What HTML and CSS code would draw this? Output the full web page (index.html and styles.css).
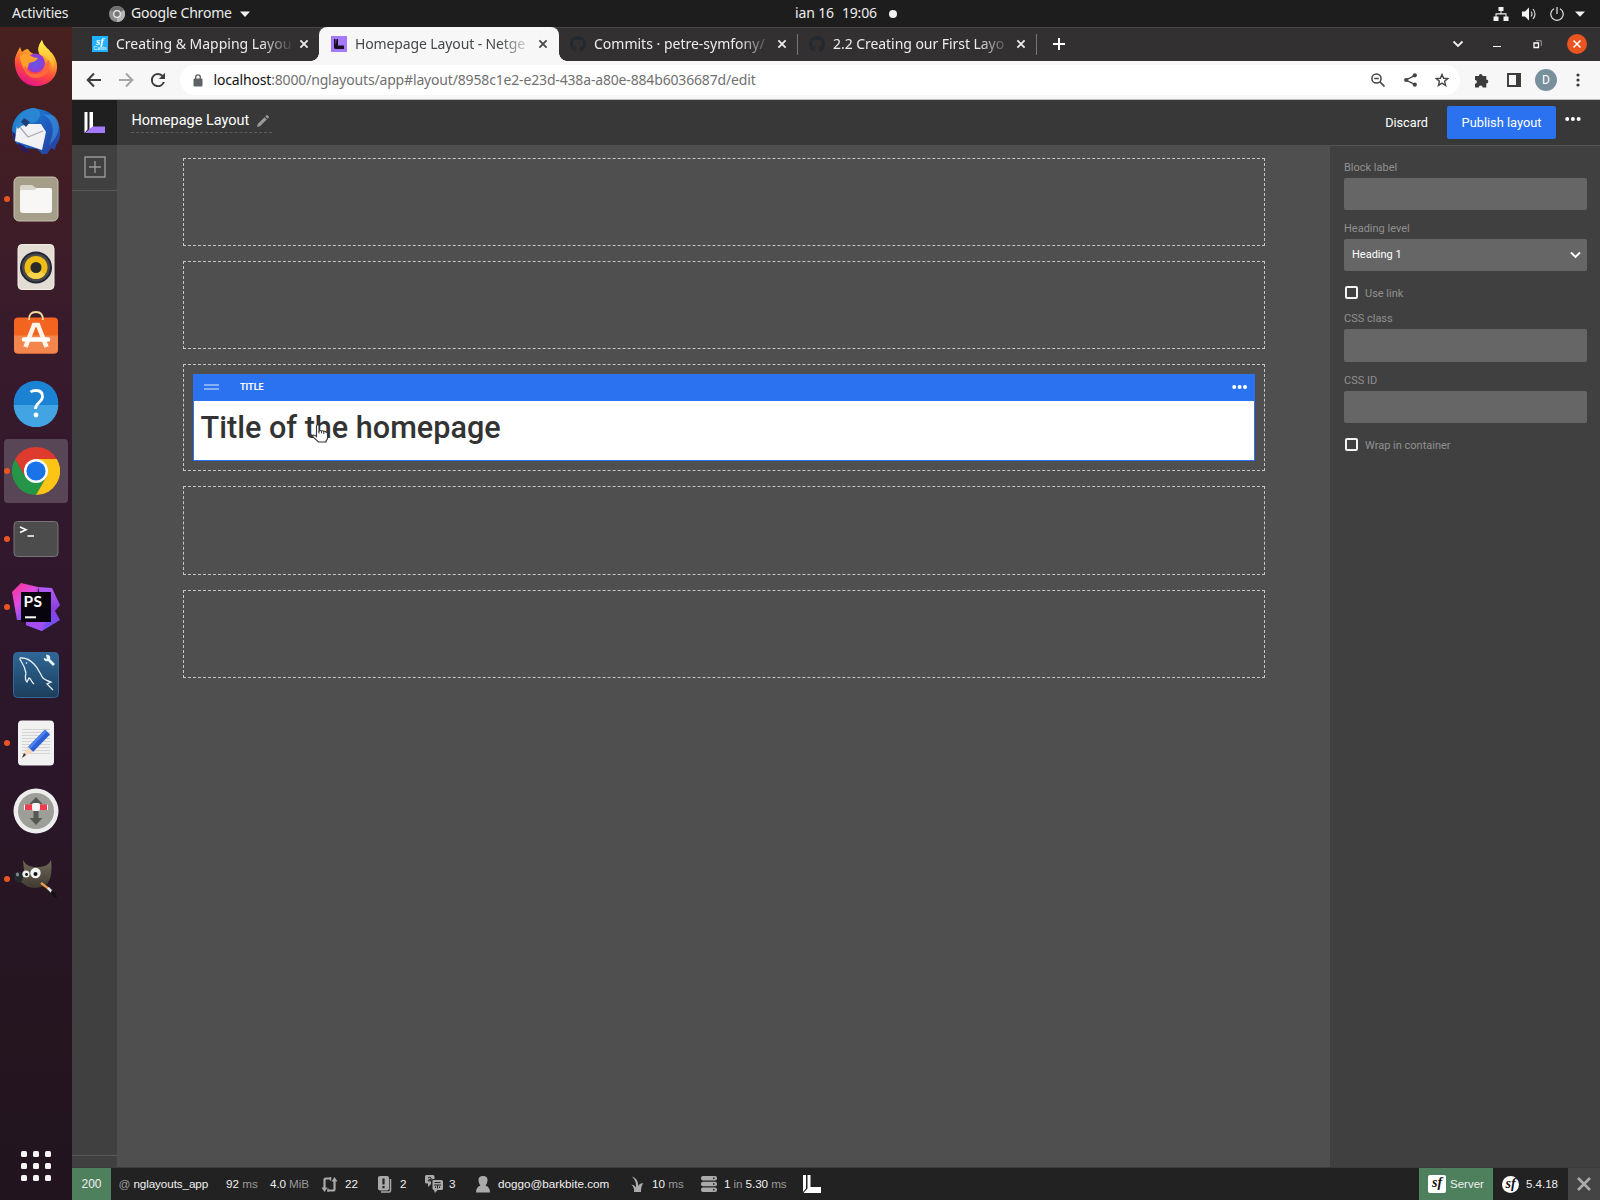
FILE: index.html
```html
<!DOCTYPE html>
<html lang="en">
<head>
<meta charset="utf-8">
<title>Homepage Layout - Netgen Layouts</title>
<link rel="stylesheet" href="styles.css">
</head>
<body>
<svg width="0" height="0" aria-hidden="true">
  <defs>
    <symbol id="x" viewBox="0 0 10 10"><path d="M1.4 1.4l7.2 7.2M8.6 1.4L1.4 8.6" fill="none" stroke="currentColor" stroke-width="1.8"/></symbol>
    <symbol id="github" viewBox="0 0 16 16"><path fill="#24292f" d="M8 0C3.58 0 0 3.58 0 8c0 3.54 2.29 6.53 5.47 7.59.4.07.55-.17.55-.38 0-.19-.01-.82-.01-1.49-2.01.37-2.53-.49-2.69-.94-.09-.23-.48-.94-.82-1.13-.28-.15-.68-.52-.01-.53.63-.01 1.08.58 1.23.82.72 1.21 1.87.87 2.33.66.07-.52.28-.87.51-1.07-1.78-.2-3.64-.89-3.64-3.95 0-.87.31-1.59.82-2.15-.08-.2-.36-1.02.08-2.12 0 0 .67-.21 2.2.82.64-.18 1.32-.27 2-.27s1.36.09 2 .27c1.53-1.04 2.2-.82 2.2-.82.44 1.1.16 1.92.08 2.12.51.56.82 1.27.82 2.15 0 3.07-1.87 3.75-3.65 3.95.29.25.54.73.54 1.48 0 1.07-.01 1.93-.01 2.2 0 .21.15.46.55.38A8.01 8.01 0 0016 8c0-4.42-3.58-8-8-8z"/></symbol>
    <linearGradient id="ff" x1=".7" y1="0" x2=".3" y2="1"><stop offset="0" stop-color="#fff44f"/><stop offset=".35" stop-color="#ffa02a"/><stop offset=".65" stop-color="#ff4a3e"/><stop offset="1" stop-color="#e3108c"/></linearGradient>
    <linearGradient id="ffy" x1="0" y1="0" x2="0" y2="1"><stop offset="0" stop-color="#fff44f"/><stop offset="1" stop-color="#ffa52b"/></linearGradient>
    <radialGradient id="ffp"><stop offset="0" stop-color="#5a5ce8"/><stop offset="1" stop-color="#9a38d2"/></radialGradient>
    <linearGradient id="tb" x1="0" y1="0" x2="1" y2="1"><stop offset="0" stop-color="#2196dd"/><stop offset=".5" stop-color="#1c5fc0"/><stop offset="1" stop-color="#2a3c9c"/></linearGradient>
    <linearGradient id="psa" x1="0" y1="0" x2=".6" y2="1"><stop offset="0" stop-color="#ff318c"/><stop offset=".5" stop-color="#e04be0"/><stop offset="1" stop-color="#6b57ff"/></linearGradient>
    <linearGradient id="psb" x1="0" y1="0" x2="0" y2="1"><stop offset="0" stop-color="#b45cf5"/><stop offset=".5" stop-color="#8a3fe0"/><stop offset="1" stop-color="#6b57ff"/></linearGradient>
    <linearGradient id="my" x1="0" y1="0" x2="0" y2="1"><stop offset="0" stop-color="#2f6797"/><stop offset="1" stop-color="#1c3e5c"/></linearGradient>
    <linearGradient id="gimp" x1="0" y1="0" x2="0" y2="1"><stop offset="0" stop-color="#70695a"/><stop offset="1" stop-color="#3f3a30"/></linearGradient>
  </defs>
</svg>

<header class="topbar">
  <span class="tb-activities">Activities</span>
  <svg class="tb-chrome" width="16" height="16" viewBox="0 0 16 16"><circle cx="8" cy="8" r="8" fill="#8c8c8c"/><path d="M8 8L1 4A8 8 0 0115 4z" fill="#6f6f6f"/><path d="M8 8l7-4A8 8 0 018 16z" fill="#b5b5b5"/><circle cx="8" cy="8" r="3.900" fill="#eee"/><circle cx="8" cy="8" r="2.700" fill="#777"/></svg>
  <span class="tb-app">Google Chrome</span>
  <svg class="tb-caret" width="10" height="6" viewBox="0 0 10 6"><path d="M0 .5h10L5 6z" fill="#f2f2f2"/></svg>
  <div class="tb-clock"><span>ian 16</span><span>19:06</span><i></i></div>
  <div class="tb-status">
    <svg width="16" height="14" viewBox="0 0 16 14"><path d="M5.500 0h5v4h-2v2.300h5V9.500h2V14h-5V9.500h2V7.500H3.500v2h2V14h-5V9.500h2V6.300h5V4h-2z" fill="#f2f2f2"/></svg>
    <svg width="15" height="14" viewBox="0 0 15 14"><path d="M0 4.500h3L7 .5v13L3 9.500H0z" fill="#f2f2f2"/><path d="M9 4.500q2 2.500 0 5M11 2q4 5 0 10" stroke="#d8d8d8" stroke-width="1.200" fill="none"/></svg>
    <svg width="14" height="14" viewBox="0 0 14 14"><path d="M4 1.700a6.200 6.200 0 106 0M7 0v7" stroke="#e6e6e6" stroke-width="1.200" fill="none"/></svg>
    <svg width="10" height="6" viewBox="0 0 10 6"><path d="M0 .5h10L5 5.800z" fill="#f2f2f2"/></svg>
  </div>
</header>

<div class="desktop">
<nav class="dock">
  <div class="app"><svg width="48" height="48" viewBox="0 0 48 48"><path d="M3 26C2 18 5 14 8 8l2 5c2-2 4-3 6-3 1 2 3 4 6 5l6 2C24 9 28 5 30 1c1 5 4 7 7 10l1 3 1-1c4 5 6 9 6 15 0 11-9 19-21 19S4 37 3 26z" fill="url(#ff)"/><path d="M30 1c1 5 4 7 7 10 5 6 6 12 4 19-1-6-6-12-11-14-6-3-3-11 0-15z" fill="url(#ffy)"/><circle cx="23.500" cy="24" r="9.500" fill="url(#ffp)"/><path d="M8 17c4-3 8-2 11 0 2 1 4 2 7 2-2 4-6 4-9 5-1 5-2 5-3 9-3-5-6-9-6-16z" fill="#ffa02a"/><path d="M14 27c1 6 5 8 10 8s9-4 9-10l4-4c2 9-3 18-13 18-7 0-12-5-12-11z" fill="#ff6a3c"/></svg></div>
  <div class="app"><svg width="48" height="48" viewBox="0 0 48 48"><path d="M0 24C0 12 9 3 17 2l4-1 3 1c13 0 23 9 24 22 0 7-1 11-4 14l-1 5-4-2-4 6-5 0-5-5-12-1C6 40 0 33 0 24z" fill="url(#tb)"/><path d="M6 36c1 6 6 10 12 10l-6-7zM0 24l4 4-2 6z" fill="#2b1a64"/><path d="M5 17l24 0 5 8-4 18L3 34z" fill="#f2f2f4"/><path d="M7 19l9 11 15-6" fill="none" stroke="#a9a9b2" stroke-width="1.300"/><path d="M4 19C8 6 15 1 22 1c7 1 8 7 3 13-7 4-14 2-19 8z" fill="#2a86d2"/><path d="M9 15l3-4 6 4-4 5z" fill="#1f3e78"/><path d="M29 7c12 4 15 16 8 31 13-11 12-26 3-30z" fill="#3f9fe8" opacity=".55"/></svg></div>
  <div class="app run"><svg width="48" height="48" viewBox="0 0 48 48"><rect x="2" y="2" width="44" height="44" rx="5" fill="#a59e89" stroke="#c7c1b0"/><path d="M8 12q0-2 2-2h10l4 3h14q2 0 2 2v8H8z" fill="#d9d5ca"/><path d="M8 17q0-2 2-2h12l3-2h13q2 0 2 2v20q0 3-3 3H11q-3 0-3-3z" fill="#f8f7f5"/></svg></div>
  <div class="app"><svg width="48" height="48" viewBox="0 0 48 48"><rect x="6" y="1.500" width="36" height="45" rx="4" fill="#e4ddd3" stroke="#f2ede6"/><circle cx="24" cy="24.500" r="16" fill="#24273a"/><circle cx="24" cy="24.500" r="14" fill="#4a4a48"/><circle cx="24" cy="24.500" r="11.500" fill="#f0bd18"/><path d="M24 24.500l9 7a11.500 11.500 0 01-18 0z" fill="#ffe16a" opacity=".6"/><circle cx="24" cy="24.500" r="5.500" fill="#2a2a2a"/></svg></div>
  <div class="app"><svg width="48" height="48" viewBox="0 0 48 48"><rect x="2" y="6.500" width="44" height="36" rx="4" fill="#f2641f"/><path d="M2 24.500h44V38q0 4.500-4 4.500H6q-4 0-4-4.500z" fill="#f3864d"/><path d="M17 9q0-8 7-8t7 8" fill="none" stroke="#f7d9a0" stroke-width="1.800"/><path d="M13.500 36L22 14h4l8.500 22" fill="none" stroke="#fff3ea" stroke-width="4.500"/><path d="M12 28.500h24" stroke="#fff" stroke-width="4.500" stroke-linecap="round"/></svg></div>
  <div class="app"><svg width="48" height="48" viewBox="0 0 48 48"><circle cx="24" cy="24" r="22.300" fill="#1c82d4"/><path d="M1.700 26h44.600a22.300 22.300 0 01-44.600 0z" fill="#42a4e3"/><path d="M18.500 13q2-1.500 5.500-1.500 6.500 0 6.500 6 0 3-3.500 6-3.500 3-3.500 6.500" fill="none" stroke="#fff" stroke-width="2.800"/><circle cx="24" cy="36" r="2.400" fill="#fff"/></svg></div>
  <div class="app run active"><svg width="48" height="48" viewBox="0 0 48 48"><path d="M3.200 12A24 24 0 0024 48l10.400-18L24 34 13.600 30z" fill="#259647"/><path d="M24 12h20.800A24 24 0 0024 0 24 24 0 003.200 12l10.400 18z" fill="#de3b2e"/><path d="M24 12h20.800A24 24 0 0124 48l10.400-18z" fill="#fcc414"/><circle cx="24" cy="24" r="12" fill="#fff"/><circle cx="24" cy="24" r="9.600" fill="#1a73e8"/></svg></div>
  <div class="app run"><svg width="48" height="48" viewBox="0 0 48 48"><rect x="2" y="6.500" width="44" height="35" rx="3.500" fill="#4c4c4c" stroke="#777"/><path d="M8 12l6 2.700L8 17.500M15.500 21H22" fill="none" stroke="#fff" stroke-width="1.600"/></svg></div>
  <div class="app run"><svg width="48" height="48" viewBox="0 0 48 48"><path d="M9 0l17 4-2 33H5L0 9z" fill="url(#psa)"/><path d="M26 4l14 1 8 17-5 6 5 9-18 11-16-6 0-5h20z" fill="url(#psb)"/><path d="M14 37l20 0-4 11-16-6z" fill="#a34df0"/><rect x="9" y="9" width="30" height="30" fill="#08040e"/><text x="11.500" y="23.500" class="ps">PS</text><path d="M13 34.300h11" stroke="#fff" stroke-width="2"/></svg></div>
  <div class="app"><svg width="48" height="48" viewBox="0 0 48 48"><rect x="1.500" y="1.500" width="45" height="45" rx="4" fill="url(#my)" stroke="#33699a"/><path d="M14 22c-1-5-3-9-5-12-2-2-1-4 1-3 5 0 8 2 12 6 5 5 6 10 9 14 2 2 5 3 8 4l-4 2c2 2 4 4 6 6M14 22c-1 4-1 7 1 9l2-4c2 0 2 4 5 6" fill="none" stroke="#e8f1f6" stroke-width="1.300"/><path d="M34 4c3-1 5 2 4 4l5 5-2 2-5-5c-2 1-5-1-4-3l3 1z" fill="#e8f1f6"/><circle cx="14.500" cy="12" r=".8" fill="#fff"/></svg></div>
  <div class="app run"><svg width="48" height="48" viewBox="0 0 48 48"><rect x="6" y="1.500" width="36" height="45" rx="4" fill="#f1f1f1"/><path d="M10 10.500h28M10 13.500h28M10 16.500h28M10 19.500h28M10 22.500h28M10 25.500h28M10 28.500h28M10 31.500h28M10 34.500h28" stroke="#d4d4d4"/><path d="M33 10.500l5 5L21 33l-5-5z" fill="#2e5fd8"/><path d="M33 10.500l2 2-17 17.500-2-2z" fill="#4d83ee"/><path d="M16 28l5 5-11 5z" fill="#f8d8bd"/><path d="M12 34l2 2-4 3z" fill="#333"/></svg></div>
  <div class="app"><svg width="48" height="48" viewBox="0 0 48 48"><circle cx="24" cy="24" r="22.500" fill="#ededed"/><circle cx="24" cy="24" r="18" fill="#9c9e97"/><path d="M24 10l6.500 7h-4v14h4L24 38l-6.500-7h4V17h-4z" fill="#555752"/><rect x="12" y="17.500" width="24" height="5.500" rx="1" fill="#f2394e"/><path d="M12.500 17.500v5.500M35.500 17.500v5.500" stroke="#fff"/><rect x="20" y="16" width="8" height="8" rx="2" fill="#f4f4f4"/></svg></div>
  <div class="app run"><svg width="48" height="48" viewBox="0 0 48 48"><path d="M11 5c3 5 6 7 13 7 8 0 12-1 15-7 1 8 1 18-4 24-7 5-17 5-22 1L6 25l6-9z" fill="url(#gimp)"/><ellipse cx="6.500" cy="22" rx="4.500" ry="5.500" fill="#23282c"/><ellipse cx="5.500" cy="19.500" rx="1.500" ry="2" fill="#7f8b90"/><circle cx="14" cy="19" r="3.600" fill="#eee"/><circle cx="14.500" cy="19.500" r="1.400" fill="#111"/><circle cx="23.500" cy="18" r="5.200" fill="#f2f2f2"/><circle cx="23.500" cy="19" r="2" fill="#111"/><path d="M29 28l8 6" stroke="#e8a04e" stroke-width="2.200"/><path d="M36 33l4 4" stroke="#e6e6e6" stroke-width="2.500"/><path d="M40 35c3 2 4 5 5 8-4-1-6-4-6-6z" fill="#111"/></svg></div>
  <svg class="show-apps" width="30" height="30" viewBox="0 0 30 30" fill="#f4f2f2"><rect width="6" height="6" rx="1.500"/><rect x="12" width="6" height="6" rx="1.500"/><rect x="24" width="6" height="6" rx="1.500"/><rect y="12" width="6" height="6" rx="1.500"/><rect x="12" y="12" width="6" height="6" rx="1.500"/><rect x="24" y="12" width="6" height="6" rx="1.500"/><rect y="24" width="6" height="6" rx="1.500"/><rect x="12" y="24" width="6" height="6" rx="1.500"/><rect x="24" y="24" width="6" height="6" rx="1.500"/></svg>
</nav>

<div class="browser">
  <div class="tabs">
    <div class="tab"><span class="casts"><b>sf</b><small>Casts</small></span><span class="tab-title t1">Creating &amp; Mapping Layou</span><svg class="close" width="10" height="10"><use href="#x"/></svg></div>
    <div class="tab current"><svg class="fav" width="16" height="16" viewBox="0 0 16 16"><rect width="16" height="16" fill="#a479fb"/><path d="M3 3h1.600v8.500L3 13zM5.500 3H7v6.500h6V13H4z" fill="#17101f"/></svg><span class="tab-title t2">Homepage Layout - Netge</span><svg class="close" width="10" height="10"><use href="#x"/></svg></div>
    <div class="tab sep"><svg class="fav" width="16" height="16"><use href="#github"/></svg><span class="tab-title t3">Commits · petre-symfony/</span><svg class="close" width="10" height="10"><use href="#x"/></svg></div>
    <div class="tab sep"><svg class="fav" width="16" height="16"><use href="#github"/></svg><span class="tab-title t4">2.2 Creating our First Layo</span><svg class="close" width="10" height="10"><use href="#x"/></svg></div>
    <svg class="new-tab" width="12" height="12" viewBox="0 0 12 12"><path d="M6 0v12M0 6h12" stroke="#fff" stroke-width="2"/></svg>
    <div class="win">
      <svg width="12" height="8" viewBox="0 0 12 8"><path d="M1.500 1.500L6 6l4.500-4.500" fill="none" stroke="#eee" stroke-width="1.900"/></svg>
      <svg width="8" height="8" viewBox="0 0 8 8"><path d="M0 6.500h8" stroke="#fff"/></svg>
      <svg width="9" height="9" viewBox="0 0 9 9"><path d="M1 3h4.500v4.500H1z" fill="none" stroke="#fff" stroke-width="1.300"/><path d="M3 .7h5.300V6" fill="none" stroke="#999"/></svg>
      <svg width="20" height="20" viewBox="0 0 20 20"><circle cx="10" cy="10" r="10" fill="#e95420"/><path d="M6.500 6.500l7 7M13.500 6.500l-7 7" stroke="#fff" stroke-width="1.500"/></svg>
    </div>
  </div>

  <div class="toolbar">
    <svg width="16" height="16" viewBox="0 0 16 16"><path d="M15 8H2.500M8 1.500L1.700 8 8 14.500" fill="none" stroke="#3c3c3c" stroke-width="2"/></svg>
    <svg width="16" height="16" viewBox="0 0 16 16"><path d="M1 8h12.500M8 1.500L14.300 8 8 14.500" fill="none" stroke="#a6a6a6" stroke-width="2"/></svg>
    <svg width="16" height="16" viewBox="0 0 16 16"><path d="M13.800 10A6.100 6.100 0 118 1.900c2 0 3.600.9 4.700 2.300" fill="none" stroke="#3c3c3c" stroke-width="2"/><path d="M15 .8V7H8.800z" fill="#3c3c3c"/></svg>
    <div class="omnibox">
      <svg class="lock" width="10" height="13" viewBox="0 0 10 13"><rect x=".5" y="4.500" width="9" height="8" rx="1" fill="#5f6368"/><path d="M2.700 5V3.200a2.300 2.300 0 014.600 0V5" fill="none" stroke="#5f6368" stroke-width="1.400"/></svg>
      <span class="url"><b>localhost</b>:8000/nglayouts/app#layout/8958c1e2-e23d-438a-a80e-884b6036687d/edit</span>
      <svg width="14" height="14" viewBox="0 0 14 14"><circle cx="5.500" cy="5.500" r="4.600" fill="none" stroke="#444" stroke-width="1.500"/><path d="M3.200 5.500h4.600M9 9l4.500 4.500" stroke="#444" stroke-width="1.600"/></svg>
      <svg width="13" height="14" viewBox="0 0 13 14"><path d="M11 2.300L2 7l9 4.700" fill="none" stroke="#444" stroke-width="1.400"/><circle cx="10.800" cy="2.300" r="2.100" fill="#444"/><circle cx="2.200" cy="7" r="2.100" fill="#444"/><circle cx="10.800" cy="11.700" r="2.100" fill="#444"/></svg>
      <svg width="14" height="14" viewBox="0 0 14 14"><path d="M7 1.400l1.600 3.900 4.200.3-3.200 2.700 1 4.200L7 10.200l-3.600 2.300 1-4.200L1.200 5.600l4.200-.3z" fill="none" stroke="#444" stroke-width="1.400"/></svg>
    </div>
    <svg class="ext" width="15" height="15" viewBox="0 0 15 15"><path d="M1 3H4.800a1.900 1.900 0 113.800 0H12.300V6.500a2 2 0 010 4V14.500H8.600a1.900 1.900 0 00-3.800 0H1V10.700a1.900 1.900 0 000-3.800z" fill="#3c3c3c"/></svg>
    <svg width="14" height="14" viewBox="0 0 14 14"><path d="M1 1h12v12H1z" fill="none" stroke="#3c3c3c" stroke-width="1.900"/><path d="M9 0h5v14H9z" fill="#3c3c3c"/></svg>
    <span class="avatar">D</span>
    <svg width="4" height="14" viewBox="0 0 4 14" fill="#3c3c3c"><circle cx="2" cy="2" r="1.600"/><circle cx="2" cy="7" r="1.600"/><circle cx="2" cy="12" r="1.600"/></svg>
  </div>

  <div class="app-head">
    <div class="logo"><svg width="22" height="22" viewBox="0 0 22 22"><path d="M.5 0h3v17.500l-3 3.500zM5.500 0H9v15l-3.500 3z" fill="#fff"/><path d="M1 21l7.500-6.500H21V21z" fill="#a479fb"/></svg></div>
    <div class="layout-name"><span>Homepage Layout</span><svg width="12" height="12" viewBox="0 0 12 12"><path d="M0 12l.7-3L7.500 2.200l2.300 2.300L3 11.300zM8.300 1.400L9.500.2q.5-.4 1 0l1.300 1.300q.4.500 0 1l-1.200 1.200z" fill="#999"/></svg></div>
    <span class="discard">Discard</span>
    <span class="publish">Publish layout</span>
    <svg class="more" width="16" height="4" viewBox="0 0 16 4" fill="#fff"><circle cx="2.200" cy="2" r="2"/><circle cx="7.900" cy="2" r="2"/><circle cx="13.600" cy="2" r="2"/></svg>
  </div>

  <div class="work">
    <aside class="rail">
      <div class="rail-add"><svg width="22" height="22" viewBox="0 0 22 22"><path d="M1 1h20v20H1zM11 5v12M5 11h12" fill="none" stroke="#979797" stroke-width="1.400"/></svg></div>
      <div class="rail-foot"></div>
    </aside>
    <main class="canvas">
      <div class="zone"></div>
      <div class="zone"></div>
      <div class="zone filled">
        <section class="block">
          <div class="block-head"><i class="grip"></i><span>TITLE</span><svg width="16" height="4" viewBox="0 0 16 4" fill="#fff"><circle cx="2.200" cy="2" r="2"/><circle cx="7.600" cy="2" r="2"/><circle cx="13" cy="2" r="2"/></svg></div>
          <h1>Title of the homepage</h1>
          <svg class="pointer" width="20" height="20" viewBox="0 0 20 20"><path d="M5.500 12.500V2.200q0-1.500 1.300-1.500T8 2.200V7q1.300-1 2.400 0 1.500-.7 2.300.4 1.600-.5 2.300.7 1.500 0 1.500 1.500V14q0 1.500-1.500 3v1H7.500L2 13q-1-1.500.5-2 1.500 0 3 1.500z" fill="#fff" stroke="#333" stroke-width="1.100"/><path d="M8 7v2.500M10.500 7.300v2M12.800 8v2" stroke="#333"/></svg>
        </section>
      </div>
      <div class="zone z4"></div>
      <div class="zone"></div>
    </main>
    <aside class="panel">
      <label>Block label</label><div class="field"></div>
      <label>Heading level</label><div class="field select"><span>Heading 1</span><svg width="11" height="8" viewBox="0 0 11 8"><path d="M1 1.500L5.500 6 10 1.500" fill="none" stroke="#fff" stroke-width="1.900"/></svg></div>
      <div class="check"><i></i><span>Use link</span></div>
      <label>CSS class</label><div class="field tall"></div>
      <label>CSS ID</label><div class="field id"></div>
      <div class="check wrap"><i></i><span>Wrap in container</span></div>
    </aside>
  </div>

  <footer class="debug">
    <span class="code">200</span>
    <span class="d route"><span><em>@</em> nglayouts_app</span></span>
    <span class="d time"><span>92 <em>ms</em></span></span>
    <span class="d mem"><span>4.0 <em>MiB</em></span></span>
    <span class="d ajax"><svg width="17" height="17" viewBox="0 0 17 17"><path d="M9.500 2.500H5Q3.500 2.500 3.500 4v9M7.500 14.500H12q1.500 0 1.500-1.500V4" fill="none" stroke="#aaa" stroke-width="2.200"/><path d="M.5 11.500h6l-3 4.500zM10.500 5.500h6l-3-4.500z" fill="#aaa"/><path d="M9.500 1v3.500M7 12.500V16" stroke="#aaa" stroke-width="1.500"/></svg><span>22</span></span>
    <span class="d log"><svg width="14" height="17" viewBox="0 0 14 17"><path d="M12.500 3v11.500q0 1.500-1.500 1.500H3" fill="none" stroke="#aaa" stroke-width="1.500"/><rect width="11" height="14.500" rx="2" fill="#aaa"/><path d="M5.500 2.500V8.500M5.500 10v2.300" stroke="#222" stroke-width="2.200"/></svg><span>2</span></span>
    <span class="d trans"><svg width="18" height="18" viewBox="0 0 18 18"><path d="M1.500 0h6.500q1.500 0 1.500 1.500V4H8q-2 0-2 2v3L3 12V8.500H1.500Q0 8.500 0 7V1.500Q0 0 1.500 0z" fill="#aaa"/><path d="M8.500 5h8q1.500 0 1.500 1.500v7q0 1.500-1.500 1.500h-4l-2.500 3-1-3q-1.500 0-1.500-1.500v-7Q7 5 8.500 5z" fill="#aaa"/><path d="M9.500 7.500h6M9 10h7M12.500 10v3.500M10.500 11.500v1.500M14.500 11.500v1.500M3 3q2-1.500 3 0v3.500M6 4.500q-3 0-3 1t3 0" fill="none" stroke="#222"/></svg><span>3</span></span>
    <span class="d user"><svg width="14" height="17" viewBox="0 0 14 17"><path d="M7 0q5 0 4.500 5-.5 3-2 4.500Q14 11 14 16.500H0Q0 11 4.500 9.500 3 8 2.500 5 2 0 7 0z" fill="#aaa"/></svg><span>doggo@barkbite.com</span></span>
    <span class="d twig"><svg width="13" height="16" viewBox="0 0 13 16"><path d="M3 16Q3.500 11 .3 8.500 3 8.500 5 11.500 5.500 5 1 .5 7 2 7.500 10 8.500 6.500 12.500 7.500 10 9 10 16z" fill="#aaa"/></svg><span>10 <em>ms</em></span></span>
    <span class="d db"><svg width="16" height="16" viewBox="0 0 16 16"><rect y="0" width="16" height="4.500" rx="2" fill="#aaa"/><rect y="5.700" width="16" height="4.500" rx="2" fill="#aaa"/><rect y="11.400" width="16" height="4.500" rx="2" fill="#aaa"/><path d="M12 2.200h1.500M12 8h1.500M12 13.700h1.500" stroke="#222" stroke-width="1.500"/></svg><span>1 <em>in</em> 5.30 <em>ms</em></span></span>
    <svg class="ng" width="18" height="18" viewBox="0 0 18 18"><path d="M0 0h3v13.500L0 17zM4.500 0h3v12H18v6H.500l4-4.500z" fill="#fff"/></svg>
    <span class="server"><b class="sf sq">sf</b>Server</span>
    <span class="version"><b class="sf">sf</b>5.4.18</span>
    <span class="hide"><svg width="14" height="14" viewBox="0 0 14 14"><path d="M1 1l12 12M13 1L1 13" stroke="#aaa" stroke-width="2.600"/></svg></span>
  </footer>
</div>
</div>
</body>
</html>
```
FILE: styles.css
```css
* { box-sizing: border-box; }
body { margin: 0; width: 1600px; height: 1200px; overflow: hidden; display: flex; flex-direction: column; background: #4f4f4f; font-family: Roboto, sans-serif; }
svg { display: block; flex: none; }
span { white-space: nowrap; }
em { font-style: normal; }

.topbar { height: 27px; background: #1d1d1d; color: #ececec; display: flex; align-items: center; font: 14px/25px "Noto Sans", sans-serif; }
.topbar span { padding-bottom: 2px; }
.tb-activities { width: 109px; padding-left: 12px; letter-spacing: -.2px; }
.tb-app { width: 109px; margin-left: 6px; letter-spacing: -.2px; }
.tb-clock { margin-left: 545px; display: flex; align-items: center; gap: 8px; letter-spacing: -.15px; }
.tb-clock i { width: 8px; height: 8px; border-radius: 50%; background: #f2f2f2; margin-left: 4px; }
.tb-status { margin-left: auto; padding-right: 15px; display: flex; align-items: center; gap: 13px; }
.tb-status svg:last-child { margin-left: -2px; }

.desktop { flex: 1; display: flex; min-height: 0; }
.dock { width: 72px; padding: 4px 4px 19px; display: flex; flex-direction: column; gap: 4px; background: linear-gradient(#48211f 0, #3f1d27 180px, #381b2b 300px, #32182d 480px, #2b162a 700px, #24151f 1000px, #22141e); }
.app { height: 64px; border-radius: 4px; display: flex; align-items: center; justify-content: center; position: relative; }
.app.active { background: #584556; }
.app.run::before { content: ""; position: absolute; left: 0; top: 29px; width: 6px; height: 6px; border-radius: 50%; background: #e95420; }
.ps { font: 700 15.500px Lato, sans-serif; fill: #fff; letter-spacing: .5px; }
.show-apps { margin: auto auto 0; }

.browser { flex: 1; min-width: 0; display: flex; flex-direction: column; }
.tabs { height: 34px; background: #333031; border-top: 1px solid #494748; display: flex; align-items: center; padding-left: 8px; font: 14px/20px "Noto Sans", sans-serif; }
.tab { width: 239px; height: 100%; display: flex; align-items: center; padding: 0 10px 1px 12px; color: #ededed; position: relative; }
.tab-title { width: 176px; margin-left: 8px; -webkit-mask-image: linear-gradient(90deg, #000 145px, transparent 178px); mask-image: linear-gradient(90deg, #000 145px, transparent 178px); }
.t2 { letter-spacing: -.12px; }
.t4 { letter-spacing: -.05px; }
.close { margin-left: 7px; }
.tab.current { background: #f7f7f7; color: #45474a; border-radius: 8px 8px 0 0; margin: -1px -1px 0 0; width: 240px; height: 34px; padding-bottom: 0; }
.tab.current::before, .tab.current::after { content: ""; position: absolute; bottom: 0; width: 8px; height: 8px; background: radial-gradient(circle at 0 0, transparent 7.500px, #f7f7f7 8px); left: -8px; }
.tab.current::after { left: auto; right: -8px; background: radial-gradient(circle at 100% 0, transparent 7.500px, #f7f7f7 8px); }
.tab.sep::after { content: ""; position: absolute; right: -1px; top: 6px; width: 1px; height: 21px; background: #787677; }
.casts { width: 16px; height: 16px; background: #1fb0ff; color: #fff; display: flex; flex-direction: column; align-items: center; }
.casts b { font: italic 700 11px/10px "Liberation Serif", serif; }
.casts small { font: 5px/5px "Liberation Sans", sans-serif; }
.new-tab { margin: 0 0 1px 17px; }
.win { margin-left: auto; padding: 0 13px 1px 0; display: flex; align-items: center; }
.win svg:nth-child(2) { margin-left: 29px; }
.win svg:nth-child(3) { margin-left: 32px; }
.win svg:nth-child(4) { margin-left: 25px; }

.toolbar { height: 39px; background: #f7f7f7; border-bottom: 1px solid #b9bdbd; display: flex; align-items: center; padding: 0 20px 0 14px; }
.toolbar > svg:nth-child(2), .toolbar > svg:nth-child(3) { margin-left: 16px; }
.omnibox { margin-left: 14px; width: 1280px; height: 30px; border-radius: 15px; background: #fff; display: flex; align-items: center; padding: 0 11px 0 13px; font: 14px/30px "Noto Sans", sans-serif; color: #707070; gap: 18.500px; }
.url { flex: 1; margin-left: -8px; letter-spacing: -.165px; }
.url b { font-weight: 400; color: #111; }
.ext { margin-left: 14px; }
.toolbar > .ext + svg { margin-left: 18px; }
.avatar { width: 22px; height: 22px; margin-left: 14px; border-radius: 50%; background: #78909c; color: #fff; font: 12px/22px Roboto, sans-serif; text-align: center; }
.toolbar > svg:last-child { margin-left: 19px; }

.app-head { height: 45px; background: #383838; display: flex; color: #fff; }
.logo { width: 45px; background: #1f1f1f; padding: 12px 0 0 11.500px; }
.layout-name { margin: 10px 0 0 14px; width: 141px; height: 23px; border-bottom: 1px dashed #5d5d5d; display: flex; font-size: 14.500px; line-height: 22px; gap: 8px; align-items: center; padding-left: .5px; }
.discard { margin-left: auto; font-size: 12.700px; line-height: 45px; }
.publish { margin: 6px 0 0 19px; width: 109px; height: 33px; border-radius: 2px; background: #2a72f0; text-align: center; font-size: 12.800px; line-height: 33px; }
.more { margin: 17px 19px 0 9px; }

.work { flex: 1; display: flex; min-height: 0; border-bottom: 1px solid #3c3c3c; }
.rail { width: 45px; background: #404040; display: flex; flex-direction: column; }
.rail-add { height: 46px; padding: 10.500px 0 0 11.500px; border-bottom: 1px solid #585858; }
.rail-foot { margin-top: auto; height: 12px; border-top: 1px solid #585858; }
.canvas { flex: 1; padding: 13px 65px 0 66px; display: flex; flex-direction: column; gap: 15px; }
.zone { height: 88px; border: 1px dashed #c6c6c6; }
.zone.filled { height: 107px; padding: 9px; }
.zone.z4 { height: 89px; }
.block { height: 87px; border: 1px solid #2a72f0; background: #fff; position: relative; }
.block-head { height: 26px; background: #2a72f0; color: #fff; display: flex; align-items: center; padding: 0 6px 2px 10px; font-size: 9px; font-weight: 700; }
.block-head svg { margin-left: auto; }
.grip { width: 15px; height: 6px; border: solid #86aff8; border-width: 2px 0; margin-right: 21px; }
.block h1 { margin: 0; padding: 6px 0 0 6.500px; font-size: 30.600px; line-height: 41px; font-weight: 500; color: #333; }
.pointer { position: absolute; left: 117px; top: 49px; }
.panel { width: 270px; background: #404040; border-top: 1px solid #555; padding: 15px 13px 0 14px; color: #909090; font-size: 11px; line-height: 14px; }
.panel label { display: block; }
.panel .field { height: 32px; background: #666; border-radius: 2px; margin: 3px 0 12px; }
.panel .field.select { display: flex; align-items: center; justify-content: space-between; padding: 0 6.500px 1px 8px; color: #fff; }
.check { display: flex; align-items: center; height: 14px; margin-top: 15px; }
.check i { width: 13px; height: 13px; border: 2px solid #f4f4f4; border-radius: 2px; margin: -1px 7px 0 1px; }
.check span { padding-top: 1px; }
.check + label { margin-top: 12px; }
.panel .tall { height: 33px; }
.panel .id { margin-top: 3px; }
.check.wrap { margin-top: 15px; }

.debug { height: 32px; background: #222; color: #f0f0f0; display: flex; align-items: center; font: 11.700px/32px "Liberation Sans", Arial, sans-serif; }
.debug em { color: #999; }
.debug .d { display: flex; align-items: center; }
.code { width: 39px; height: 32px; background: #4f805d; text-align: center; font-size: 12px; }
.route { width: 115px; padding-left: 7.500px; letter-spacing: -.1px; }
.time { width: 44px; }
.mem { width: 51px; letter-spacing: -.1px; }
.ajax { width: 57px; gap: 7px; }
.log { width: 47px; gap: 8px; }
.trans { width: 51px; gap: 6px; }
.user { width: 155px; gap: 8px; }
.twig { width: 70px; gap: 8px; }
.db { width: 102px; gap: 7px; letter-spacing: -.1px; }
.server { margin-left: auto; width: 74px; height: 32px; background: #4f805d; display: flex; align-items: center; padding-left: 9px; gap: 4px; font-size: 11.500px; }
.sf { width: 17px; height: 17px; border-radius: 50%; background: #fff; color: #111; font: italic 700 14px/15px "Liberation Serif", serif; text-align: center; }
.sf.sq { width: 18px; height: 18px; border-radius: 2px; }
.version { width: 75px; padding-left: 9px; display: flex; align-items: center; gap: 7px; font-size: 11.500px; }
.hide { width: 32px; height: 32px; background: #444; display: flex; align-items: center; justify-content: center; }
```
